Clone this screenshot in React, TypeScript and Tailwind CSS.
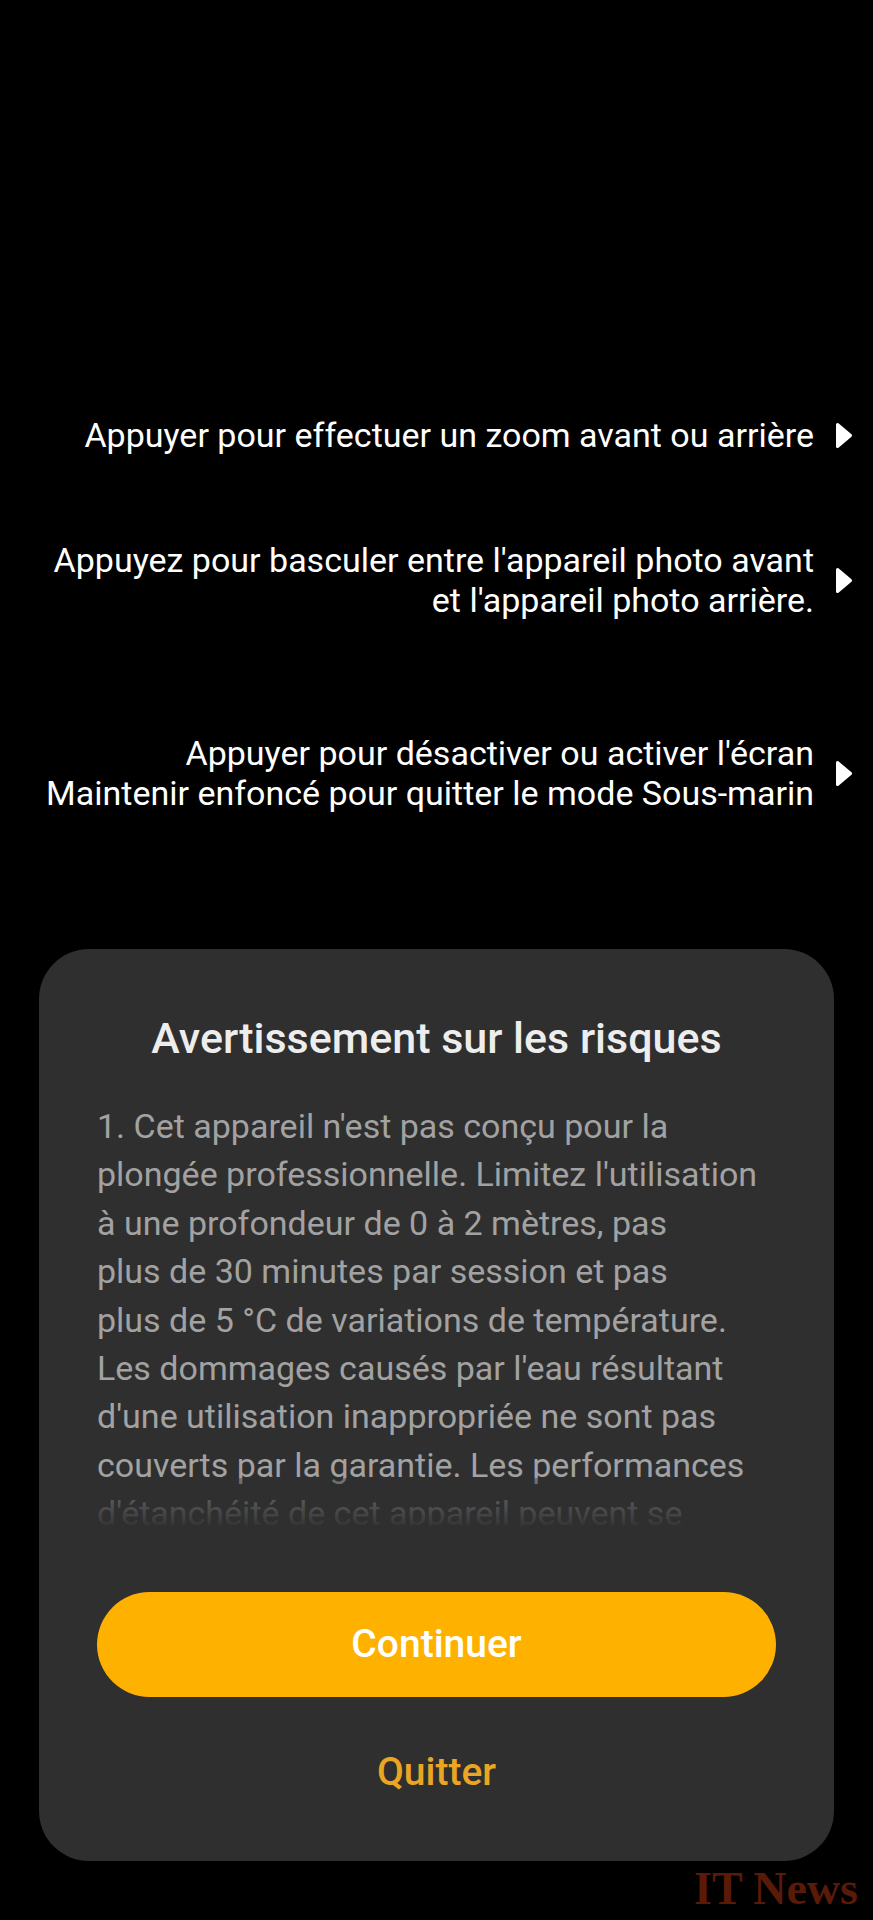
import React from 'react';

const hints: string[][] = [
  ['Appuyer pour effectuer un zoom avant ou arrière'],
  ["Appuyez pour basculer entre l'appareil photo avant", "et l'appareil photo arrière."],
  ["Appuyer pour désactiver ou activer l'écran", 'Maintenir enfoncé pour quitter le mode Sous-marin'],
];

const bodyLines = [
  "1. Cet appareil n'est pas conçu pour la",
  "plongée professionnelle. Limitez l'utilisation",
  'à une profondeur de 0 à 2 mètres, pas',
  'plus de 30 minutes par session et pas',
  'plus de 5 °C de variations de température.',
  "Les dommages causés par l'eau résultant",
  "d'une utilisation inappropriée ne sont pas",
  'couverts par la garantie. Les performances',
  "d'étanchéité de cet appareil peuvent se",
];

function Arrow() {
  return (
    <svg width="18" height="27" viewBox="0 0 18 27" className="shrink-0">
      <polygon
        points="2.5,2.5 15.5,13.5 2.5,24.5"
        fill="white"
        stroke="white"
        strokeWidth="3"
        strokeLinejoin="round"
      />
    </svg>
  );
}

function Hint({ lines }: { lines: string[] }) {
  return (
    <div className="flex items-center justify-end gap-[21px] pr-[20px]">
      <div className="text-right text-[34px] leading-[40px] text-white">
        {lines.map((l) => (
          <div key={l} className="whitespace-nowrap">{l}</div>
        ))}
      </div>
      <Arrow />
    </div>
  );
}

export default function App() {
  return (
    <div
      className="w-[873px] h-[1920px] bg-black flex flex-col overflow-hidden"
      style={{ fontFamily: 'Roboto, "Noto Sans", sans-serif' }}
    >
      <div className="pt-[415px] flex flex-col">
        <Hint lines={hints[0]} />
        <div className="h-[85px]" />
        <Hint lines={hints[1]} />
        <div className="h-[113px]" />
        <Hint lines={hints[2]} />
      </div>

      <div className="mx-[39px] mt-[136px] rounded-[50px] bg-[#2f2f2f] px-[58px] pt-[65px] pb-[65px] flex flex-col">
        <h1 className="text-center text-[43px] leading-[48px] font-medium text-[#ededed]">
          Avertissement sur les risques
        </h1>

        <div className="relative mt-[40px] h-[424px] overflow-hidden">
          <div className="text-[34px] leading-[48.4px] text-[#a2a2a2]">
            {bodyLines.map((l) => (
              <div key={l} className="whitespace-nowrap">{l}</div>
            ))}
          </div>
          <div className="absolute inset-x-0 bottom-0 h-[48px] bg-linear-to-t from-[#2f2f2f]/95 to-[#2f2f2f]/40" />
        </div>

        <button className="mt-[66px] h-[105px] w-full rounded-full bg-[#ffb100] text-[39px] font-medium text-white">
          Continuer
        </button>

        <div className="mt-[51px] text-center text-[39px] leading-[48px] font-medium text-[#eaa623]">
          Quitter
        </div>
      </div>

      <div className="flex justify-end pr-[15px] mt-[4px]">
        <span
          className="text-[46px] font-bold text-[#5a1a08] leading-[48px]"
          style={{ fontFamily: '"Liberation Serif", serif' }}
        >
          IT News
        </span>
      </div>
    </div>
  );
}
